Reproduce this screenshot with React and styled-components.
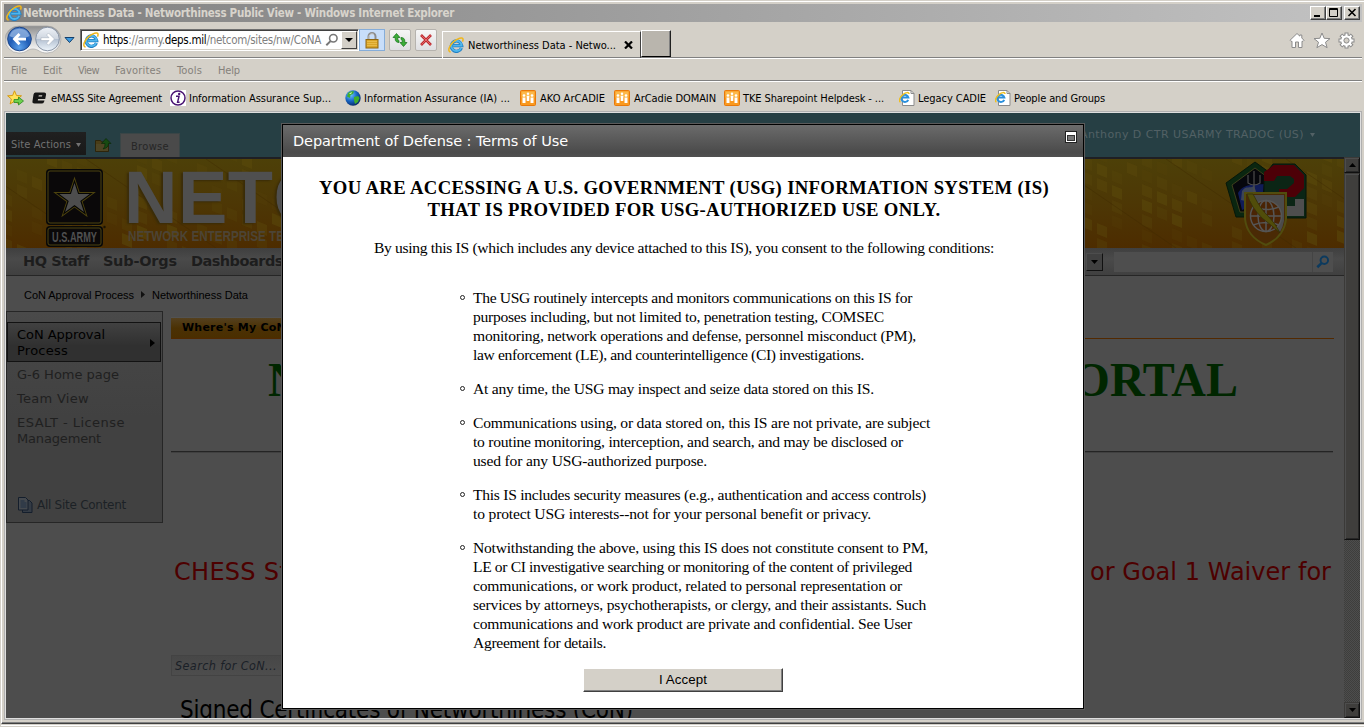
import React, { useLayoutEffect, useRef } from "react";
import styled, { createGlobalStyle, css } from "styled-components";

const tahoma = '"DejaVu Sans Condensed", "DejaVu Sans", sans-serif';
const verdana = '"DejaVu Sans", Verdana, sans-serif';
const times = '"Liberation Serif", "Times New Roman", serif';
const arial = '"Liberation Sans", Arial, sans-serif';

const Global = createGlobalStyle`
  * { box-sizing: border-box; }
  html, body { margin: 0; padding: 0; overflow: hidden; }
  svg { display: block; flex: none; }
`;

/* Text that tracks its letters out or in so that a line keeps a fixed measure. */
const FitSpan = styled.span`
  display: inline-block;
  white-space: pre;
  flex: none;
`;
function Fit({ w, children }) {
  const ref = useRef(null);
  useLayoutEffect(() => {
    const el = ref.current;
    el.style.letterSpacing = "0px";
    const natural = el.getBoundingClientRect().width;
    const n = el.textContent.length;
    el.style.letterSpacing = `${(w - natural) / n}px`;
  }, [w]);
  return <FitSpan ref={ref}>{children}</FitSpan>;
}

/* ---------- window frame ---------- */
const Window = styled.div`
  width: 1364px;
  height: 727px;
  background: #d4d0c8;
  display: flex;
  flex-direction: column;
  padding: 1px 0 0 1px;
  font-family: ${tahoma};
  font-size: 11px;
  color: #000;
`;
const Frame = styled.div`
  flex: none;
  height: 723px;
  border-top: 1px solid #fff;
  border-left: 1px solid #fff;
  border-bottom: 1px solid #404040;
  box-shadow: inset 0 -1px 0 #808080;
  padding: 2px 2px 0 2px;
  display: flex;
  flex-direction: column;
`;
const FrameFoot = styled.div`
  margin-top: 1px;
  height: 1px;
  background: #fff;
`;
const TitleBar = styled.div`
  height: 18px;
  flex: none;
  display: flex;
  align-items: center;
  padding: 0 2px 0 2px;
  background: linear-gradient(90deg, #808080, #c2c2c2);
  color: #d8d4cc;
  font-weight: 700;
  font-size: 11.5px;
`;
const TitleText = styled.div`
  margin-left: 1px;
  flex: 1;
  line-height: 18px;
`;
const CaptionButton = styled.div`
  width: 16px;
  height: 14px;
  margin-left: ${(p) => p.$gap || 0}px;
  background: #d4d0c8;
  border: 1px solid;
  border-color: #fff #404040 #404040 #fff;
  box-shadow: inset -1px -1px 0 #808080;
`;
const groove = css`
  border-bottom: 1px solid #808080;
  box-shadow: 0 1px 0 #fff;
`;
const Toolbar = styled.div`
  height: 36px;
  flex: none;
  display: flex;
  align-items: flex-start;
  ${groove}
`;
const NavKnobs = styled.div`
  margin: 3px 0 0 1px;
`;
const AddressBar = styled.div`
  width: 279px;
  height: 22px;
  margin: 7px 0 0 3px;
  display: flex;
  align-items: center;
  background: #fff;
  border: 1px solid;
  border-color: #707070 #fff #fff #707070;
  box-shadow: inset 1px 1px 0 #404040, inset -1px -1px 0 #d4d0c8;
  padding-left: 2px;
  font-size: 11.5px;
  color: #808080;
  b { font-weight: 400; color: #000; }
`;
const AddressText = styled.div`
  margin: 0 3px 0 4px;
  width: 219px;
`;
const DropButton = styled.div`
  width: 16px;
  height: 18px;
  margin-left: auto;
  margin-right: 1px;
  background: #d4d0c8;
  border: 1px solid;
  border-color: #fff #404040 #404040 #fff;
  display: flex;
  align-items: center;
  justify-content: center;
`;
const LockBox = styled.div`
  width: 26px;
  height: 22px;
  margin: 7px 0 0 0;
  background: #c8defa;
  border: 1px solid #86add9;
  display: flex;
  align-items: center;
  justify-content: center;
`;
const ToolButton = styled.div`
  width: 22px;
  height: 22px;
  margin: 7px 0 0 4px;
  background: linear-gradient(#f6f6f6, #dfdfe2);
  border: 1px solid #b6b3ae;
  border-radius: 2px;
  display: flex;
  align-items: center;
  justify-content: center;
`;
const Tab = styled.div`
  width: 199px;
  height: 27px;
  margin: 9px 0 0 5px;
  border: 1px solid #fff;
  border-right: 1px solid #404040;
  border-bottom: 0;
  display: flex;
  align-items: center;
  padding-left: 5px;
`;
const TabText = styled.div`
  margin: 0 8px 0 4px;
`;
const NewTab = styled.div`
  width: 30px;
  height: 27px;
  margin: 8px 0 0 0;
  background: #b9b5ad;
  border: 1px solid;
  border-color: #fff #202020 #000 #fff;
  box-shadow: inset -1px 0 0 #808080;
`;
const ToolIcons = styled.div`
  margin: 10px 7px 0 auto;
  display: flex;
  gap: 7.5px;
`;
const MenuBar = styled.div`
  height: 23px;
  flex: none;
  display: flex;
  gap: 16px;
  align-items: center;
  padding: 2px 0 0 7px;
  color: #85817b;
  ${groove}
`;
const FavBar = styled.div`
  height: 30px;
  flex: none;
  display: flex;
  align-items: center;
  padding: 4px 0 0 3px;
`;
const FavItem = styled.div`
  display: flex;
  align-items: center;
  gap: ${(p) => p.$gap ?? 4}px;
  margin-left: ${(p) => p.$ml}px;
`;

/* ---------- page viewport ---------- */
const Viewport = styled.div`
  position: relative;
  width: 1358px;
  height: 609px;
  flex: none;
  border: 1px solid #b0b0b0;
  padding: 1px;
  background: #dedede;
`;
const Page = styled.div`
  width: 1354px;
  height: 605px;
  background: #4d4d4d;
  display: flex;
  flex-direction: column;
  overflow: hidden;
`;
const Ribbon = styled.div`
  height: 44px;
  flex: none;
  background: #263f44;
  display: flex;
  align-items: flex-end;
  font-size: 11px;
`;
const SiteActions = styled.div`
  width: 80px;
  height: 23px;
  margin-bottom: 2px;
  padding: 2px 0 0 5px;
  background: linear-gradient(#202020, #191919);
  color: #727272;
  display: flex;
  align-items: center;
  gap: 5px;
`;
const BrowseTab = styled.div`
  width: 60px;
  height: 24px;
  margin-left: 8px;
  background: #4a4a4a;
  border: 1px solid #3a4546;
  border-bottom: 0;
  color: #262626;
  display: flex;
  align-items: center;
  justify-content: center;
  padding: 2px 0 0 0;
`;
const FolderSlot = styled.div`
  margin: 0 0 5px 9px;
`;
const UserName = styled.div`
  margin-left: auto;
  margin-right: 45px;
  margin-bottom: 16px;
  font-family: ${verdana};
  color: #526165;
  display: flex;
  align-items: center;
  gap: 6px;
`;
const Below = styled.div`
  flex: 1;
  display: flex;
  min-height: 0;
`;
const Content = styled.div`
  width: 1338px;
  display: flex;
  flex-direction: column;
  border-top: 2px solid #1f1f23;
`;
const Banner = styled.div`
  height: 89px;
  flex: none;
  position: relative;
  background: linear-gradient(#4d4008, #4d3705 50%, #4d2c00);
  overflow: hidden;
`;
const BannerArt = styled.div`
  position: absolute;
  inset: 0;
`;
const BannerRow = styled.div`
  position: relative;
  display: flex;
  height: 89px;
  padding: 9px 0 0 39px;
`;
const Brand = styled.div`
  margin-left: 20px;
  color: #4f4f4f;
  font-family: ${arial};
  white-space: nowrap;
  flex: 1;
`;
const BrandName = styled.div`
  height: 59px;
  margin-left: -3px;
  font-weight: 700;
  font-size: 74px;
  letter-spacing: 0.5px;
  line-height: 60px;
  text-shadow: -2px 1px 2px #3a2c08;
`;
const Patches = styled.div`
  margin: -7px 37px 0 0;
`;
const GlobalNav = styled.div`
  height: 28px;
  flex: none;
  background: linear-gradient(#3f3f3f, #4a4a4a 40%, #404040);
  border-bottom: 1px solid #262626;
  display: flex;
  align-items: center;
  padding-left: 17px;
  gap: 14px;
  font-family: ${verdana};
  font-weight: 700;
  font-size: 14.5px;
  color: #1d1d1d;
`;
const NavLabel = styled.div`
  margin-top: -2px;
`;
const ScopeButton = styled.div`
  margin-left: auto;
  width: 17px;
  height: 18px;
  background: #404040;
  border: 1px solid;
  border-color: #4d4d4d #111 #111 #4d4d4d;
  display: flex;
  align-items: center;
  justify-content: center;
`;
const SearchField = styled.div`
  width: 219px;
  height: 20px;
  margin: 0 11px 0 -3px;
  background: #4e4e4e;
  display: flex;
  justify-content: flex-end;
  align-items: center;
`;
const SearchGo = styled.div`
  width: 21px;
  height: 20px;
  border-left: 1px solid #444;
  display: flex;
  align-items: center;
  justify-content: center;
`;
const Crumbs = styled.div`
  height: 35px;
  flex: none;
  padding: 2px 0 0 18px;
  display: flex;
  align-items: center;
  gap: 7px;
  font-family: ${arial};
  font-size: 11px;
`;
const Columns = styled.div`
  display: flex;
  gap: 8px;
`;
const SideNav = styled.div`
  width: 157px;
  height: 212px;
  border: 1px solid #262626;
  background: linear-gradient(#4a4a4a 0, #454545 20%, #414141 50%);
  padding-top: 10px;
  font-family: ${verdana};
  font-size: 13px;
  line-height: 16px;
  color: #202020;
`;
const SideSelected = styled.div`
  width: 154px;
  height: 40px;
  border: 1px solid #121212;
  background: linear-gradient(#414141, #303030 60%);
  color: #000;
  display: flex;
  align-items: center;
  justify-content: space-between;
  padding: 2px 5px 0 9px;
`;
const SideLink = styled.div`
  padding-left: 10px;
  margin-top: ${(p) => p.$mt ?? 8}px;
`;
const AllContent = styled.div`
  margin: 49px 0 0 11px;
  display: flex;
  gap: 4px;
  align-items: center;
  font-size: 12px;
  height: 18px;
  color: #1c2126;
`;
const MainCol = styled.div`
  width: 1163px;
  padding-top: 6px;
  display: flex;
  flex-direction: column;
`;
const TabRule = styled.div`
  height: 22px;
  border-bottom: 1px solid #522900;
`;
const OrangeTab = styled.div`
  width: 130px;
  height: 21px;
  background: linear-gradient(#54401f, #4b3104 50%, #4a2e00);
  border-top: 1px solid #525252;
  padding-left: 11px;
  line-height: 20px;
  font-family: ${verdana};
  font-size: 11px;
  font-weight: 700;
`;
const PortalTitle = styled.div`
  margin: 14px 96px 0 97px;
  height: 55px;
  line-height: 54px;
  display: flex;
  justify-content: space-between;
  font-family: ${times};
  font-weight: 700;
  font-size: 48px;
  color: #002600;
`;
const Rule = styled.div`
  width: 1162px;
  height: 2px;
  margin-top: 43px;
  background: #242424;
  border-bottom: 1px solid #404040;
`;
const Notice = styled.div`
  margin: 104px 3px 0 3px;
  height: 30px;
  line-height: 30px;
  display: flex;
  justify-content: space-between;
  font-family: ${verdana};
  font-size: 24px;
  color: #4d0000;
`;
const ListSearch = styled.div`
  width: 260px;
  height: 21px;
  margin-top: 68px;
  border: 1px solid #434343;
  background: linear-gradient(#474747, #4d4d4d);
  padding-left: 3px;
  line-height: 19px;
  font-style: italic;
  font-size: 12.5px;
  color: #1a2027;
`;
const ListTitle = styled.div`
  margin: 19px 0 0 9px;
  font-size: 24px;
  line-height: 30px;
  white-space: nowrap;
`;
const ScrollBar = styled.div`
  width: 16px;
  display: flex;
  flex-direction: column;
  justify-content: space-between;
  background: repeating-conic-gradient(#3e3e3c 0 25%, #4d4d4d 0 50%) 0 0 / 2px 2px;
`;
const ScrollBox = styled.div`
  height: ${(p) => p.$h}px;
  background: #3f3e3c;
  border: 1px solid;
  border-color: #3b3a38 #101010 #101010 #3b3a38;
  box-shadow: inset 1px 1px 0 #4d4d4d, inset -1px -1px 0 #262626;
  display: flex;
  align-items: center;
  justify-content: center;
`;

/* ---------- consent dialog ---------- */
const Dialog = styled.div`
  position: absolute;
  left: 277px;
  top: 12px;
  width: 802px;
  height: 585px;
  background: #fff;
  border: 1px solid #000;
  box-shadow: 0 0 0 1px #5a5a5a;
`;
const DialogHead = styled.div`
  height: 32px;
  background: linear-gradient(#6b6b6b, #4b4b4b 85%, #505050);
  display: flex;
  justify-content: space-between;
  padding: 0 6px 0 10px;
  font-family: ${verdana};
  font-size: 14.5px;
  line-height: 32px;
  color: #fff;
`;
const MaxBox = styled.div`
  width: 12px;
  height: 12px;
  margin-top: 6px;
  border: 1px solid #222;
  background: #fff;
  padding: 3px 1px 1px;
`;
const MaxInner = styled.div`
  height: 6px;
  border: 1px solid #333;
  background: #777;
`;
const DialogBody = styled.div`
  font-family: ${times};
  display: flex;
  flex-direction: column;
  align-items: center;
  padding-top: 20px;
`;
const Warning = styled.div`
  padding-left: 2px;
  font-size: 18.7px;
  font-weight: 700;
  line-height: 22px;
  text-align: center;
`;
const Intro = styled.div`
  margin-top: 17px;
  padding-left: 2px;
  font-size: 15.6px;
  line-height: 20px;
`;
const Terms = styled.ul`
  list-style: none;
  width: 624px;
  margin: 30px 0 1px;
  padding: 0 0 0 89px;
  font-size: 15.6px;
  line-height: 19px;
`;
const Term = styled.li`
  display: flex;
  gap: 8px;
  margin-bottom: 15px;
`;
const Dot = styled.div`
  width: 5px;
  height: 5px;
  margin-top: 7px;
  border: 1px solid #222;
  border-radius: 50%;
`;
const TermLines = styled.div`
  display: flex;
  flex-direction: column;
  align-items: flex-start;
`;
const Accept = styled.div`
  width: 200px;
  height: 24px;
  background: #d4d0c8;
  border: 1px solid;
  border-color: #fff #404040 #404040 #fff;
  box-shadow: inset -1px -1px 0 #808080;
  font-family: ${arial};
  font-size: 13.3px;
  line-height: 22px;
  text-align: center;
`;

/* ---------- drawings ---------- */
const IeLogo = ({ s = 16 }) => (
  <svg width={s} height={s} viewBox="0 0 16 16" fill="none">
    <path d="M13.4 11A5.2 5.2 0 1 1 13.7 8.6H5.2" stroke="#1f7fc4" strokeWidth="3.3" />
    <path d="M13.2 10.9A5.1 5.1 0 1 1 13.6 8.6H5.2" stroke="#4fb6ec" strokeWidth="1.8" />
    <path d="M2.6 14.9C-.8 14.6 1 8.8 5.4 4.9 9.600 1 14.400-.2 15 2c.2 1-.1 1.800-.5 2.600" stroke="#f0b71c" strokeWidth="1.5" />
  </svg>
);
const IePage = () => (
  <svg width="16" height="16" viewBox="0 0 16 16" fill="none">
    <path d="M3.500.5h8.500l3 3v12h-11.500z" fill="#fff" stroke="#8b8b8b" />
    <path d="M12 .5v3h3" stroke="#8b8b8b" />
    <path d="M9.200 9.800A3.600 3.600 0 1 1 9.400 7.600H3" stroke="#2b90dc" strokeWidth="2" />
    <path d="M1.400 12C-.8 11 1 7 4 4.600 7 2 10 2 10 4" stroke="#f1bf1c" strokeWidth="1.400" />
  </svg>
);
const Knobs = () => (
  <svg width="72" height="30" viewBox="0 0 72 30" fill="none">
    <defs>
      <radialGradient id="kb" cx=".5" cy=".85" r=".8">
        <stop offset="0" stopColor="#5aa0ea" /><stop offset=".55" stopColor="#1f5cb5" /><stop offset="1" stopColor="#4a7cc4" />
      </radialGradient>
      <linearGradient id="kf" x1="0" y1="0" x2="0" y2="1">
        <stop offset="0" stopColor="#eef2f7" /><stop offset=".48" stopColor="#cfd6e0" /><stop offset=".52" stopColor="#b4c1d2" /><stop offset="1" stopColor="#eef5fb" />
      </linearGradient>
      <linearGradient id="ks" x1="0" y1="0" x2="0" y2="1">
        <stop offset="0" stopColor="#8d8d8d" /><stop offset=".6" stopColor="#d9d9d9" /><stop offset="1" stopColor="#fff" />
      </linearGradient>
    </defs>
    <path d="M14 1h28a14 13.500 0 0 1 0 27c-8 0-8-4-14-4s-6 4-14 4a14 13.500 0 0 1 0-27z" fill="url(#ks)" stroke="#a5a5a5" strokeWidth=".7" />
    <circle cx="14.500" cy="14" r="11.800" fill="url(#kb)" stroke="#1d468a" />
    <path d="M4.500 11a10.500 10.500 0 0 1 20 0c-5 3-15 3-20 0z" fill="#a4c1e8" opacity=".65" />
    <path d="M7.500 14l6-6 2 2-2.500 2.700h8v2.800h-8l2.500 2.700-2 2z" fill="#fff" />
    <circle cx="42.500" cy="14" r="11.800" fill="url(#kf)" stroke="#8793a5" />
    <path d="M49.500 14l-6-6-2 2 2.500 2.700h-8v2.800h8l-2.500 2.700 2 2z" fill="#fff" stroke="#a7b1bf" strokeWidth=".6" />
    <path d="M60 12.500h9l-4.500 5z" fill="#3f9be0" stroke="#12406e" />
  </svg>
);
const Lens = ({ c, w = 16, sw = 1.8 }) => (
  <svg width={w} height={w} viewBox="0 0 16 16" fill="none" stroke={c} strokeWidth={sw}>
    <circle cx="9.500" cy="6" r="4.300" />
    <path d="M6.300 9.300L1.500 14" strokeWidth={sw * 1.300} />
  </svg>
);
const Caret = ({ c = "#000", w = 7, up }) => (
  <svg width={w} height="4" viewBox="0 0 8 4" preserveAspectRatio="none"><path d={up ? "M0 4h8L4 0z" : "M0 0h8L4 4z"} fill={c} /></svg>
);
const Lock = () => (
  <svg width="14" height="17" viewBox="0 0 14 17" fill="none">
    <path d="M3.500 8V4.500a3.500 3.500 0 0 1 7 0V8" stroke="#8d8d8d" strokeWidth="2" />
    <path d="M4 7.500V4.500a3 3 0 0 1 5-2" stroke="#d8d8d8" strokeWidth=".8" />
    <rect x="1" y="7.500" width="12" height="8.500" fill="#d9a528" stroke="#8f6712" />
    <path d="M2 9.500h10M2 11.500h10M2 13.500h10" stroke="#e8bb48" />
  </svg>
);
const Refresh = () => (
  <svg width="18" height="18" viewBox="0 0 18 18" fill="none">
    <path d="M2 6.500L5.500 2.500 9 6.500H6.800v1.700c0 .8.400 1.300 1.200 1.300v2C5.500 11.500 4.200 10.200 4.200 8V6.500z" fill="#3cae38" stroke="#16701a" strokeWidth=".7" />
    <path d="M16 11.500l-3.500 4-3.500-4h2.200V9.800c0-.8-.4-1.300-1.200-1.300v-2c2.500 0 3.800 1.300 3.800 3.500v1.500z" fill="#3cae38" stroke="#16701a" strokeWidth=".7" />
  </svg>
);
const Stop = () => (
  <svg width="14" height="14" viewBox="0 0 14 14" fill="none">
    <path d="M2 2l10 10M12 2L2 12" stroke="#c02a2f" strokeWidth="2.600" />
    <path d="M2.500 2.500l9 9M11.500 2.500l-9 9" stroke="#e0686a" strokeWidth="1" />
  </svg>
);
const CloseX = () => (
  <svg width="9" height="8" viewBox="0 0 9 8"><path d="M1 .5l7 7M8 .5l-7 7" stroke="#000" strokeWidth="2.200" /></svg>
);
const Home = () => (
  <svg width="16" height="17" viewBox="0 0 16 17"><path d="M8 1.500l2.800 2.600V3h2v3l2.200 2.300-1 1H13V15.500H9.500V10H6.500v5.500H3V9.300H2l-1-1z" fill="#fff" stroke="#8b8b8b" strokeWidth="1" /></svg>
);
const Star = () => (
  <svg width="18" height="17" viewBox="0 0 18 17"><path d="M9 1l2.200 5.300 5.800.3-4.500 3.600 1.600 5.500L9 12.600l-5.100 3.100 1.600-5.500L1 6.600l5.800-.3z" fill="#fff" stroke="#8b8b8b" /></svg>
);
const Gear = () => (
  <svg width="17" height="17" viewBox="0 0 17 17" fill="none">
    <g stroke="#8b8b8b" strokeWidth="4">
      {[0, 45, 90, 135].map((a) => <path key={a} d="M8.500.5v16" transform={`rotate(${a} 8.500 8.500)`} />)}
    </g>
    <circle cx="8.500" cy="8.500" r="6.300" fill="#8b8b8b" />
    <g stroke="#fff" strokeWidth="2">
      {[0, 45, 90, 135].map((a) => <path key={a} d="M8.500 1.500v14" transform={`rotate(${a} 8.500 8.500)`} />)}
    </g>
    <circle cx="8.500" cy="8.500" r="5.300" fill="#fff" />
    <circle cx="8.500" cy="8.500" r="2.600" fill="#d4d0c8" stroke="#8b8b8b" />
  </svg>
);
const FavStar = () => (
  <svg width="17" height="16" viewBox="0 0 17 16">
    <path d="M7.500.8l2 4.700 5 .3-3.900 3.200 1.300 5-4.400-2.800-4.400 2.800 1.300-5L.6 5.800l5-.3z" fill="#ffe25a" stroke="#d69a12" />
    <path d="M7 9.500h4.500V7l5 4-5 4v-2.500H7z" fill="#6ed04d" stroke="#2c8a22" strokeWidth=".8" />
  </svg>
);
const EIcon = () => (
  <svg width="15" height="12" viewBox="0 0 15 12">
    <path d="M3.500.5h8.500q2.500 0 2 2.500L13.200 7H6l-.2 1.500h6.700L12 10q-.5 1.500-2.500 1.500H2.500Q0 11.500.5 9L1.500 2.500Q2 .5 3.500.5zM6.800 3.200L6.500 4.600h3.500L10.300 3.200z" fill="#161616" fillRule="evenodd" />
  </svg>
);
const InfoIcon = () => (
  <svg width="16" height="16" viewBox="0 0 16 16">
    <rect width="16" height="16" fill="#fff" />
    <circle cx="8" cy="8" r="7" fill="#fff" stroke="#4a1574" strokeWidth="1.500" />
    <circle cx="9.200" cy="3.900" r="1.200" fill="#4a1574" />
    <path d="M6 6.300h3L7.600 12.200h2" stroke="#4a1574" strokeWidth="1.500" fill="none" />
  </svg>
);
const Globe = () => (
  <svg width="16" height="16" viewBox="0 0 16 16">
    <defs><radialGradient id="gl" cx=".35" cy=".3" r=".8"><stop offset="0" stopColor="#6ec5ff" /><stop offset=".5" stopColor="#1766c4" /><stop offset="1" stopColor="#061f55" /></radialGradient></defs>
    <circle cx="8" cy="8" r="7.700" fill="url(#gl)" />
    <path d="M3 3c2-2 5-2 6-1.500L8 4 5.500 5 5 8 2 6.500zM9 7l4-1 1.500 2-1.500 4-3 2-1-3.500z" fill="#3fae2c" />
    <path d="M4 3.500l3-1.500-1 2z" fill="#dff6cf" />
  </svg>
);
const PeopleIcon = () => (
  <svg width="16" height="16" viewBox="0 0 16 16">
    <rect x=".5" y=".5" width="15" height="15" rx="1" fill="#f9991f" stroke="#e8780a" />
    <rect x="1.500" y="1.500" width="13" height="6" fill="#fcb84b" />
    <circle cx="4" cy="5.500" r="1.300" fill="#fff" /><circle cx="12" cy="5.500" r="1.300" fill="#fff" /><circle cx="8" cy="3.800" r="1.200" fill="#fff" />
    <path d="M2.500 7.500h3V13h-3zM10.500 7.500h3V13h-3zM6.700 5.800h2.600V11H6.700z" fill="#fff" />
  </svg>
);
const FolderUp = () => (
  <svg width="17" height="14" viewBox="0 0 17 14">
    <path d="M.5 2.500h5l1 1.500h7v9.500H.5z" fill="#4a3d17" stroke="#2e250b" />
    <path d="M1 6h12v7H1z" fill="#4e4524" />
    <path d="M11 .5l5 5h-2.500c0 3-2 5-5.500 5.500 1.500-1.500 2-3 2-5.500H6.500z" fill="#174a12" stroke="#0b2a08" strokeWidth=".7" />
  </svg>
);
const Docs = () => (
  <svg width="15" height="16" viewBox="0 0 15 16" fill="none" stroke="#141e2c">
    <path d="M4.500 3.500h7l2.500 2.500v9.500H4.500z" fill="#343b44" />
    <path d="M.5.500h7l2.500 2.500v10H.5z" fill="#45494e" />
    <path d="M2.500 4h4M2.500 6h6M2.500 8h6M2.500 10h6" stroke="#1f2e42" />
  </svg>
);
const SmallArrow = ({ w = 5, h = 8, c = "#111" }) => (
  <svg width={w} height={h} viewBox="0 0 5 8" preserveAspectRatio="none"><path d="M0 0l5 4-5 4z" fill={c} /></svg>
);
const starPath = (cx, cy, r, k = 0.382) =>
  Array.from({ length: 10 }, (_, i) => {
    const a = -Math.PI / 2 + (i * Math.PI) / 5;
    const q = i % 2 ? r * k : r;
    return `${(cx + q * Math.cos(a)).toFixed(1)},${(cy + q * Math.sin(a)).toFixed(1)}`;
  }).join(" ");
const ArmyLogo = () => (
  <svg width="62" height="80" viewBox="0 0 62 80">
    <rect x="1" y="1" width="57" height="56" rx="4" fill="#080808" />
    <rect x="3" y="3" width="53" height="52" rx="2" fill="#0a0809" stroke="#4d4310" strokeWidth="1" />
    <polygon points={starPath(29.500, 31, 22.500)} fill="#4d430e" />
    <polygon points={starPath(29.500, 31, 19.500)} fill="#050505" />
    <polygon points={starPath(29.500, 31, 16)} fill="#4d4d4d" />
    <rect x="1" y="58" width="57" height="21" rx="4" fill="#080808" />
    <rect x="3" y="60" width="53" height="17" rx="2" fill="#0a0809" stroke="#4d4310" />
    <text x="7" y="73.500" textLength="45" lengthAdjust="spacingAndGlyphs" fontFamily="Liberation Sans, sans-serif" fontWeight="700" fontSize="14" fill="#505050">U.S.ARMY</text>
    <circle cx="59.500" cy="59" r="1.200" fill="#1a1404" />
  </svg>
);
const BrandLine = () => (
  <svg width="158" height="16" viewBox="0 0 158 16">
    <text x="1" y="13.500" textLength="156" lengthAdjust="spacingAndGlyphs" fontFamily="Liberation Sans, sans-serif" fontWeight="700" fontSize="14" fill="#4c4436">NETWORK ENTERPRISE TE</text>
  </svg>
);
const cells = [];
for (let c = 0; c < 90; c++) {
  for (let r = 0; r < 8; r++) {
    const v = (c * 37 + r * 53 + ((c * r * 7) % 11) * 13) % 17;
    if (v > 4 + ((c * 5) % 6)) cells.push({ c, r, o: 0.15 + (v % 5) * 0.09 });
  }
}
const Mosaic = () => (
  <svg width="1338" height="89" viewBox="0 0 1338 89">
    {cells.map(({ c, r, o }) => {
      const x = c * 15 - 4;
      const y = r * 15 - 12 + ((c * 7) % 15);
      return <path key={`${c}-${r}`} d={`M${x} ${y}l10 4v11l-10-4z`} fill="#5c4a0c" opacity={o} />;
    })}
    <g stroke="#3f2a02" opacity=".4" fill="none">
      {Array.from({ length: 12 }, (_, i) => <path key={i} d={`M${i * 120 - 40} 0l130 89`} />)}
    </g>
  </svg>
);
const PatchArt = () => (
  <svg width="82" height="86" viewBox="0 0 82 86">
    <path d="M30 1L1 22l10 34h38l10-34z" fill="#0a2610" stroke="#061709" />
    <path d="M30 7L7 24l8 27h30l8-27z" fill="#06070c" stroke="#4d4a20" strokeWidth=".8" />
    <path d="M13 32c6-10 16-8 26-9l-2 18-20 8z" fill="#101c58" />
    <path d="M17 30c4-6 8-2 12-5l3 8-8 8-8-2z" fill="#3c4556" />
    <path d="M29 10v22M23 14v8q6 4 12 0v-8" stroke="#4d4d4d" strokeWidth="1.200" fill="none" />
    <path d="M48 3h22l11 11v43H60l-21-20V15z" fill="#0b2515" stroke="#06160b" />
    <path d="M49 4h20l10 10v13l-9 9H54v-8h8l7-6v-4l-4-3H52l-3 5H39v-9z" fill="#4d0007" />
    <path d="M60 45h10v-7h9v17H60z" fill="#4e4e4e" />
    <path d="M20 32h41v26q-2 18-20 26-19-8-21-26z" fill="#4a2a05" stroke="#514c0e" strokeWidth="2" />
    <path d="M26 34h33v26q-1 6-4 11z" fill="#4b4b4b" />
    <g stroke="#555" strokeWidth="1.500" fill="#4a2405">
      <circle cx="41" cy="55" r="15.500" />
      <path d="M25.500 55h31M41 39.500v31M28 46q13 5 26 0M28 64q13-5 26 0" />
      <ellipse cx="41" cy="55" rx="8" ry="15.500" fill="none" />
    </g>
    <path d="M22 33h6q8 16 15 22 8 8 12 17-10-9-18-15Q26 46 22 33z" fill="#514d0a" stroke="#33300a" strokeWidth=".8" />
  </svg>
);

const terms = [
  [["The USG routinely intercepts and monitors communications on this IS for", 439], ["purposes including, but not limited to, penetration testing, COMSEC", 411], ["monitoring, network operations and defense, personnel misconduct (PM),", 443], ["law enforcement (LE), and counterintelligence (CI) investigations.", 391]],
  [["At any time, the USG may inspect and seize data stored on this IS.", 401]],
  [["Communications using, or data stored on, this IS are not private, are subject", 457], ["to routine monitoring, interception, and search, and may be disclosed or", 430], ["used for any USG-authorized purpose.", 234]],
  [["This IS includes security measures (e.g., authentication and access controls)", 453], ["to protect USG interests--not for your personal benefit or privacy.", 398]],
  [["Notwithstanding the above, using this IS does not constitute consent to PM,", 455], ["LE or CI investigative searching or monitoring of the content of privileged", 439], ["communications, or work product, related to personal representation or", 429], ["services by attorneys, psychotherapists, or clergy, and their assistants. Such", 453], ["communications and work product are private and confidential. See User", 439], ["Agreement for details.", 133]],
];
const menus = [["File", 16], ["Edit", 19], ["View", 21], ["Favorites", 46], ["Tools", 25], ["Help", 22]];
const favs = [
  [EIcon, "eMASS Site Agreement", 111, 8, 4],
  [InfoIcon, "Information Assurance Sup...", 142, 8, 3],
  [Globe, "Information Assurance (IA) ...", 146, 14, 3],
  [PeopleIcon, "AKO ArCADIE", 65, 10, 4],
  [PeopleIcon, "ArCadie DOMAIN", 82, 9, 4],
  [PeopleIcon, "TKE Sharepoint Helpdesk - ...", 141, 8, 3],
  [IePage, "Legacy CADIE", 68, 15, 3],
  [IePage, "People and Groups", 91, 9, 3],
];

export default function App() {
  return (
    <Window>
      <Global />
      <Frame>
        <TitleBar>
          <IeLogo s={16} />
          <TitleText><Fit w={431}>Networthiness Data - Networthiness Public View - Windows Internet Explorer</Fit></TitleText>
          <CaptionButton><svg width="14" height="12"><path d="M3 8h6v2H3z" /></svg></CaptionButton>
          <CaptionButton><svg width="14" height="12"><path d="M2.500 1.500h8v8h-8zM2 2.500h9" fill="none" stroke="#000" /></svg></CaptionButton>
          <CaptionButton $gap={2}><svg width="14" height="12"><path d="M3.500 2l7 7M10.500 2l-7 7" stroke="#000" strokeWidth="1.600" /></svg></CaptionButton>
        </TitleBar>
        <Toolbar>
          <NavKnobs><Knobs /></NavKnobs>
          <AddressBar>
            <IeLogo />
            <AddressText><Fit w={218}><b>https</b>://army.<b>deps.mil</b>/netcom/sites/nw/CoNA</Fit></AddressText>
            <Lens c="#777" w={14} />
            <DropButton><Caret w={8} /></DropButton>
          </AddressBar>
          <LockBox><Lock /></LockBox>
          <ToolButton><Refresh /></ToolButton>
          <ToolButton><Stop /></ToolButton>
          <Tab>
            <IeLogo />
            <TabText><Fit w={148}>Networthiness Data - Netwo...</Fit></TabText>
            <CloseX />
          </Tab>
          <NewTab />
          <ToolIcons><Home /><Star /><Gear /></ToolIcons>
        </Toolbar>
        <MenuBar>{menus.map(([t, w]) => <Fit key={t} w={w}>{t}</Fit>)}</MenuBar>
        <FavBar>
          <FavStar />
          {favs.map(([Icon, t, w, ml, gap]) => (
            <FavItem key={t} $ml={ml} $gap={gap}><Icon /><Fit w={w}>{t}</Fit></FavItem>
          ))}
        </FavBar>
        <Viewport>
          <Page>
            <Ribbon>
              <SiteActions><Fit w={60}>Site Actions</Fit><Caret c="#727272" w={5} /></SiteActions>
              <FolderSlot><FolderUp /></FolderSlot>
              <BrowseTab><Fit w={38}>Browse</Fit></BrowseTab>
              <UserName><Fit w={224}>Anthony D CTR USARMY TRADOC (US)</Fit><Caret c="#526165" w={5} /></UserName>
            </Ribbon>
            <Below>
              <Content>
                <Banner>
                  <BannerArt><Mosaic /></BannerArt>
                  <BannerRow>
                    <ArmyLogo />
                    <Brand>
                      <BrandName>NETC</BrandName>
                      <BrandLine />
                    </Brand>
                    <Patches><PatchArt /></Patches>
                  </BannerRow>
                </Banner>
                <GlobalNav>
                  <NavLabel><Fit w={65}>HQ Staff</Fit></NavLabel>
                  <NavLabel><Fit w={74}>Sub-Orgs</Fit></NavLabel>
                  <NavLabel><Fit w={92}>Dashboards</Fit></NavLabel>
                  <ScopeButton><Caret /></ScopeButton>
                  <SearchField><SearchGo><Lens c="#0c3a5e" w={14} sw={2.2} /></SearchGo></SearchField>
                </GlobalNav>
                <Crumbs>
                  <Fit w={110}>CoN Approval Process</Fit><SmallArrow w={4} h={7} /><Fit w={96}>Networthiness Data</Fit>
                </Crumbs>
                <Columns>
                  <SideNav>
                    <SideSelected>
                      <div><Fit w={88}>CoN Approval</Fit><br /><Fit w={51}>Process</Fit></div>
                      <SmallArrow c="#000" />
                    </SideSelected>
                    <SideLink $mt={5}><Fit w={102}>G-6 Home page</Fit></SideLink>
                    <SideLink><Fit w={72}>Team View</Fit></SideLink>
                    <SideLink><Fit w={108}>ESALT - License</Fit><br /><Fit w={84}>Management</Fit></SideLink>
                    <AllContent><Docs /><Fit w={89}>All Site Content</Fit></AllContent>
                  </SideNav>
                  <MainCol>
                    <TabRule><OrangeTab><Fit w={104}>Where's My CoN</Fit></OrangeTab></TabRule>
                    <PortalTitle><span>N</span><span>ORTAL</span></PortalTitle>
                    <Rule />
                    <Notice><Fit w={115}>CHESS St</Fit><Fit w={241}>or Goal 1 Waiver for</Fit></Notice>
                    <ListSearch><Fit w={102}>Search for CoN...</Fit></ListSearch>
                    <ListTitle><Fit w={453}>Signed Certificates of Networthiness (CoN)</Fit></ListTitle>
                  </MainCol>
                </Columns>
              </Content>
              <ScrollBar>
                <div>
                  <ScrollBox $h={16}><Caret up /></ScrollBox>
                  <ScrollBox $h={367} />
                </div>
                <ScrollBox $h={16}><Caret /></ScrollBox>
              </ScrollBar>
            </Below>
          </Page>
          <Dialog>
            <DialogHead>
              <Fit w={275}>Department of Defense : Terms of Use</Fit>
              <MaxBox><MaxInner /></MaxBox>
            </DialogHead>
            <DialogBody>
              <Warning>
                <Fit w={730}>YOU ARE ACCESSING A U.S. GOVERNMENT (USG) INFORMATION SYSTEM (IS)</Fit><br />
                <Fit w={513}>THAT IS PROVIDED FOR USG-AUTHORIZED USE ONLY.</Fit>
              </Warning>
              <Intro><Fit w={620}>By using this IS (which includes any device attached to this IS), you consent to the following conditions:</Fit></Intro>
              <Terms>
                {terms.map((lines, i) => (
                  <Term key={i}>
                    <Dot />
                    <TermLines>{lines.map(([t, w]) => <Fit key={t} w={w}>{t}</Fit>)}</TermLines>
                  </Term>
                ))}
              </Terms>
              <Accept><Fit w={48}>I Accept</Fit></Accept>
            </DialogBody>
          </Dialog>
        </Viewport>
      </Frame>
      <FrameFoot />
    </Window>
  );
}
